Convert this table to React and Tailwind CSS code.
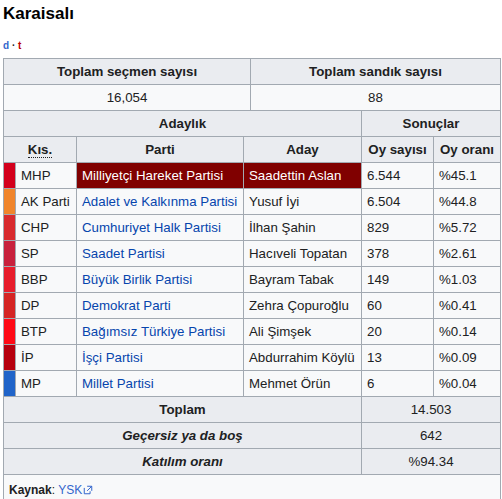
import React from 'react';

const rows = [
    { kis: 'MHP', color: 'bg-[#d3001c]', parti: 'Milliyetçi Hareket Partisi', aday: 'Saadettin Aslan', oy: '6.544', oran: '%45.1', win: true },
    { kis: 'AK Parti', color: 'bg-[#f0852c]', parti: 'Adalet ve Kalkınma Partisi', aday: 'Yusuf İyi', oy: '6.504', oran: '%44.8' },
    { kis: 'CHP', color: 'bg-[#d82a2e]', parti: 'Cumhuriyet Halk Partisi', aday: 'İlhan Şahin', oy: '829', oran: '%5.72' },
    { kis: 'SP', color: 'bg-[#c8213d]', parti: 'Saadet Partisi', aday: 'Hacıveli Topatan', oy: '378', oran: '%2.61' },
    { kis: 'BBP', color: 'bg-[#e71d2c]', parti: 'Büyük Birlik Partisi', aday: 'Bayram Tabak', oy: '149', oran: '%1.03' },
    { kis: 'DP', color: 'bg-[#d52524]', parti: 'Demokrat Parti', aday: 'Zehra Çopuroğlu', oy: '60', oran: '%0.41' },
    { kis: 'BTP', color: 'bg-[#ff0a16]', parti: 'Bağımsız Türkiye Partisi', aday: 'Ali Şimşek', oy: '20', oran: '%0.14' },
    { kis: 'İP', color: 'bg-[#b6000f]', parti: 'İşçi Partisi', aday: 'Abdurrahim Köylü', oy: '13', oran: '%0.09' },
    { kis: 'MP', color: 'bg-[#2064c9]', parti: 'Millet Partisi', aday: 'Mehmet Örün', oy: '6', oran: '%0.04' },
];

const cell = 'border border-[#a2a9b1] h-[26px] py-0 px-[5px] align-middle';
const head = `${cell} bg-[#eaecf0] font-bold text-center`;

export default function App() {
    return (
        <div className="bg-white min-h-[499px] text-[#202122] font-['Liberation_Sans',Arial,sans-serif]">
            <h2 className="px-[3px] pt-[3px] text-[17px] leading-[22px] font-bold text-black">Karaisalı</h2>
            <div className="px-[3px] mt-[15px] text-[10px] leading-[12px] font-bold">
                <span className="text-[#3366cc]">d</span>
                <span className="text-[#202122]"> · </span>
                <span className="text-[#ba0000]">t</span>
            </div>

            <table className="ml-[3px] mt-[6px] w-[497px] table-fixed border-collapse bg-[#f8f9fa] text-[13.3px] leading-[18px]">
                <colgroup>
                    <col className="w-[12px]" />
                    <col className="w-[61px]" />
                    <col className="w-[167px]" />
                    <col className="w-[7px]" />
                    <col className="w-[111px]" />
                    <col className="w-[72px]" />
                    <col className="w-[67px]" />
                </colgroup>
                <tbody>
                    <tr>
                        <th colSpan={4} className={head}>Toplam seçmen sayısı</th>
                        <th colSpan={3} className={head}>Toplam sandık sayısı</th>
                    </tr>
                    <tr>
                        <td colSpan={4} className={`${cell} text-center`}>16,054</td>
                        <td colSpan={3} className={`${cell} text-center`}>88</td>
                    </tr>
                    <tr>
                        <th colSpan={5} className={head}>Adaylık</th>
                        <th colSpan={2} className={head}>Sonuçlar</th>
                    </tr>
                    <tr>
                        <th colSpan={2} className={head}>
                            <abbr className="no-underline border-b border-dotted border-[#202122]">Kıs.</abbr>
                        </th>
                        <th className={head}>Parti</th>
                        <th colSpan={2} className={head}>Aday</th>
                        <th className={`${head} whitespace-nowrap px-0`}>Oy sayısı</th>
                        <th className={`${head} whitespace-nowrap px-0`}>Oy oranı</th>
                    </tr>
                    {rows.map((r) => (
                        <tr key={r.kis}>
                            <td className={`${cell} ${r.color} px-0`}></td>
                            <td className={`${cell} whitespace-nowrap`}>{r.kis}</td>
                            <td className={`${cell} whitespace-nowrap ${r.win ? 'bg-[#800000] text-white' : 'text-[#0645ad]'}`}>{r.parti}</td>
                            <td colSpan={2} className={`${cell} whitespace-nowrap ${r.win ? 'bg-[#800000] text-white' : ''}`}>{r.aday}</td>
                            <td className={cell}>{r.oy}</td>
                            <td className={cell}>{r.oran}</td>
                        </tr>
                    ))}
                    <tr>
                        <th colSpan={5} className={head}>Toplam</th>
                        <td colSpan={2} className={`${cell} bg-[#eaecf0] text-center`}>14.503</td>
                    </tr>
                    <tr>
                        <th colSpan={5} className={`${head} italic`}>Geçersiz ya da boş</th>
                        <td colSpan={2} className={`${cell} bg-[#eaecf0] text-center`}>642</td>
                    </tr>
                    <tr>
                        <th colSpan={5} className={`${head} italic`}>Katılım oranı</th>
                        <td colSpan={2} className={`${cell} bg-[#eaecf0] text-center`}>%94.34</td>
                    </tr>
                    <tr>
                        <td colSpan={7} className="border border-[#a2a9b1] h-[30px] px-[5px] text-[12px] align-middle">
                            <span className="font-bold">Kaynak</span>:{' '}
                            <span className="text-[#3366cc]">YSK</span>
                            <svg className="inline-block ml-[1px] align-[-1px]" width="10" height="10" viewBox="0 0 12 12">
                                <path fill="none" stroke="#3366cc" strokeWidth="1.2" d="M1.5 3.5v7h7v-3M5 1.5h5.5V7M10.5 1.5 5 7" />
                            </svg>
                        </td>
                    </tr>
                </tbody>
            </table>
        </div>
    );
}
